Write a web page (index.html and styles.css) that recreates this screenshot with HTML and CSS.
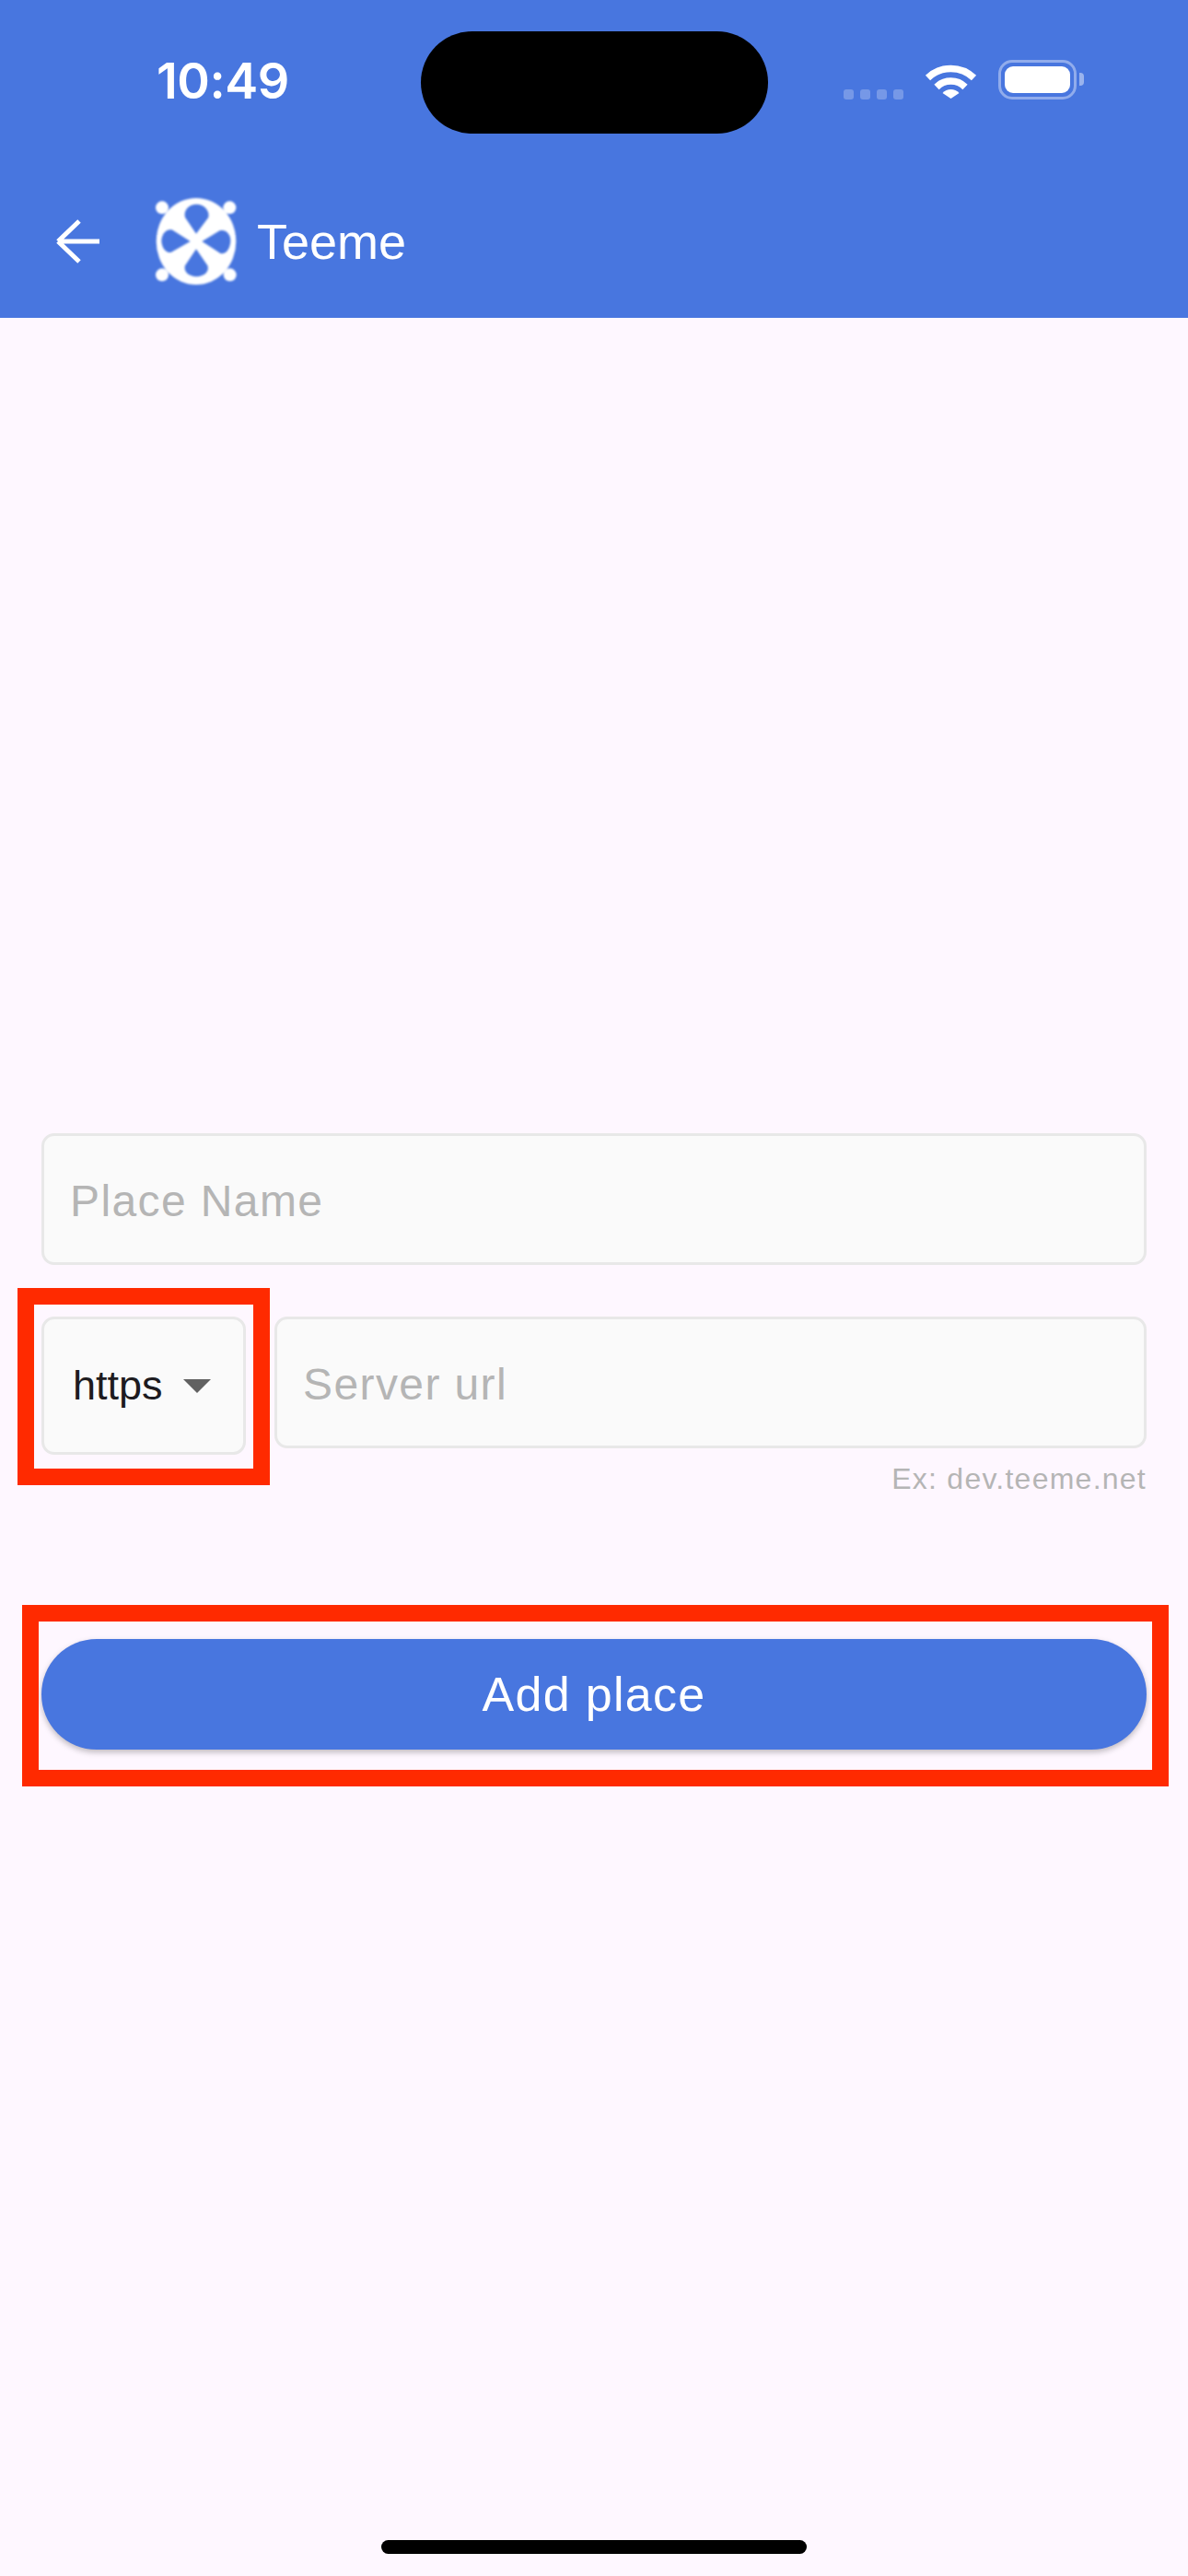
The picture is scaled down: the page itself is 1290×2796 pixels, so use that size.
FILE: index.html
```html
<!DOCTYPE html>
<html lang="en">
<head>
    <meta charset="UTF-8">
    <meta name="viewport" content="width=device-width, initial-scale=1.0">
    <title>Add place</title>
    <link rel="stylesheet" href="styles.css">
</head>
<body>
    <div class="page">
        <header class="topbar">
            <div class="status">
                <span class="time">10:49</span>
                <div class="island"></div>
                <div class="status-icons">
                    <div class="signal"><i></i><i></i><i></i><i></i></div>
                    <svg class="wifi" viewBox="0 0 57 42">
                        <path d="M3.5 18.5a36 36 0 0 1 50 0" fill="none" stroke="#fff" stroke-width="7.5"/>
                        <path d="M13 28.5a22 22 0 0 1 31 0" fill="none" stroke="#fff" stroke-width="7.5"/>
                        <path d="M19.5 36a12 12 0 0 1 18 0L28.5 42z" fill="#fff" transform="translate(0 -1)"/>
                    </svg>
                    <div class="battery"><div class="battery-fill"></div></div>
                    <div class="battery-cap"></div>
                </div>
            </div>
            <div class="appbar">
                <svg class="back" viewBox="0 0 48 48">
                    <path d="M48 24H3M26 2L3 24l0 0M3 24l23 22" fill="none" stroke="#fff" stroke-width="5"/>
                </svg>
                <svg class="logo" viewBox="54 39 270 288">
                    <circle cx="78" cy="73" r="21" fill="#fff"/>
                    <circle cx="298" cy="73" r="21" fill="#fff"/>
                    <circle cx="78" cy="292" r="21" fill="#fff"/>
                    <circle cx="299" cy="292" r="21" fill="#fff"/>
                    <ellipse cx="189" cy="183" rx="130" ry="141" fill="#fff"/>
                    <g fill="#4876df">
                        <path d="M189 158L153 105C146 80 168 62 190 62C212 62 234 80 229 105Z"/>
                        <path d="M189 208L153 262C146 283 168 298 190 298C212 298 234 283 226 262Z"/>
                        <path d="M170 183L112 146C92 140 76 160 76 181C76 202 90 224 108 218Z"/>
                        <path d="M208 183L266 148C286 142 301 160 301 181C301 202 288 228 268 222Z"/>
                    </g>
                </svg>
                <span class="app-title">Teeme</span>
            </div>
        </header>

        <main class="form">
            <div class="field"><span class="placeholder">Place Name</span></div>

            <div class="url-row">
                <div class="scheme">
                    <span class="scheme-value">https</span>
                    <span class="caret"></span>
                    <div class="mark mark-scheme"></div>
                </div>
                <div class="url-col">
                    <div class="field"><span class="placeholder">Server url</span></div>
                    <div class="hint">Ex: dev.teeme.net</div>
                </div>
            </div>

            <div class="add-btn">
                Add place
                <div class="mark mark-btn"></div>
            </div>
        </main>

        <div class="home-bar"></div>
    </div>
</body>
</html>
```

FILE: styles.css
```css
* { box-sizing: border-box; }

body {
    margin: 0;
    background-color: #fef7ff;
    font-family: "Liberation Sans", Arial, sans-serif;
}

.page {
    display: flex;
    flex-direction: column;
    height: 2796px;
    overflow: hidden;
}

/* top blue area */
.topbar {
    height: 345px;
    background-color: #4876df;
    color: #fff;
}

.status {
    display: flex;
    height: 179px;
    padding-top: 34px;
}

.time {
    width: 457px;
    padding-left: 170px;
    font-family: Inter, sans-serif;
    font-size: 54px;
    font-weight: 600;
    line-height: 108px;
    letter-spacing: -0.5px;
}

.island {
    width: 377px;
    height: 111px;
    border-radius: 56px;
    background-color: #000;
}

.status-icons {
    display: flex;
    align-items: flex-end;
    height: 74px;
    padding-left: 82px;
}

.signal {
    display: flex;
    gap: 7px;
    margin-right: 23px;
}

.signal i {
    width: 11px;
    height: 11px;
    border-radius: 3px;
    background-color: rgba(255, 255, 255, 0.25);
}

.wifi {
    width: 57px;
    height: 42px;
    margin-right: 23px;
}

.battery {
    width: 85px;
    height: 43px;
    padding: 4px;
    border: 3px solid rgba(255, 255, 255, 0.4);
    border-radius: 15px;
}

.battery-fill {
    height: 100%;
    border-radius: 9px;
    background-color: #fff;
}

.battery-cap {
    width: 5px;
    height: 14px;
    margin-left: 3px;
    margin-bottom: 15px;
    border-radius: 0 4px 4px 0;
    background-color: rgba(255, 255, 255, 0.45);
}

.appbar {
    display: flex;
    align-items: center;
    height: 166px;
    padding-left: 60px;
}

.back {
    width: 48px;
    height: 48px;
}

.logo {
    width: 90px;
    height: 96px;
    margin-left: 60px;
    filter: blur(0.8px);
}

.app-title {
    margin-left: 21px;
    font-size: 54px;
}

/* form */
.form {
    padding: 885px 45px 0;
}

.field {
    height: 143px;
    padding-left: 28px;
    border: 3px solid #e8e8e8;
    border-radius: 14px;
    background-color: #fafafa;
}

.placeholder {
    font-size: 48px;
    line-height: 141px;
    letter-spacing: 1.4px;
    color: #b5b5b5;
}

.url-row {
    display: flex;
    gap: 31px;
    margin-top: 56px;
}

.scheme {
    position: relative;
    display: flex;
    align-items: center;
    flex: none;
    width: 222px;
    height: 150px;
    padding-left: 31px;
    border: 3px solid #e8e8e8;
    border-radius: 14px;
    background-color: #fafafa;
}

.scheme-value {
    font-size: 45px;
    color: #1d1b20;
}

.caret {
    margin-left: 22px;
    border-top: 15px solid #616161;
    border-left: 15px solid transparent;
    border-right: 15px solid transparent;
}

.url-col {
    flex: 1;
}

.hint {
    margin-top: 15px;
    text-align: right;
    font-size: 32px;
    letter-spacing: 1.25px;
    color: #b5b5b5;
}

.add-btn {
    position: relative;
    height: 120px;
    margin-top: 155px;
    border-radius: 60px;
    background-color: #4876df;
    box-shadow: 0 3px 6px rgba(0, 0, 0, 0.25);
    text-align: center;
    font-size: 52px;
    line-height: 120px;
    letter-spacing: 1.3px;
    color: #fff;
}

/* red annotation frames over the controls */
.mark {
    position: absolute;
    border: 18px solid #ff2a00;
    pointer-events: none;
}

.mark-scheme {
    top: -34px;
    left: -29px;
    width: 274px;
    height: 214px;
}

.mark-btn {
    top: -37px;
    left: -21px;
    width: 1245px;
    height: 197px;
}

.home-bar {
    width: 462px;
    height: 15px;
    margin: auto auto 24px;
    border-radius: 8px;
    background-color: #000;
}
```
